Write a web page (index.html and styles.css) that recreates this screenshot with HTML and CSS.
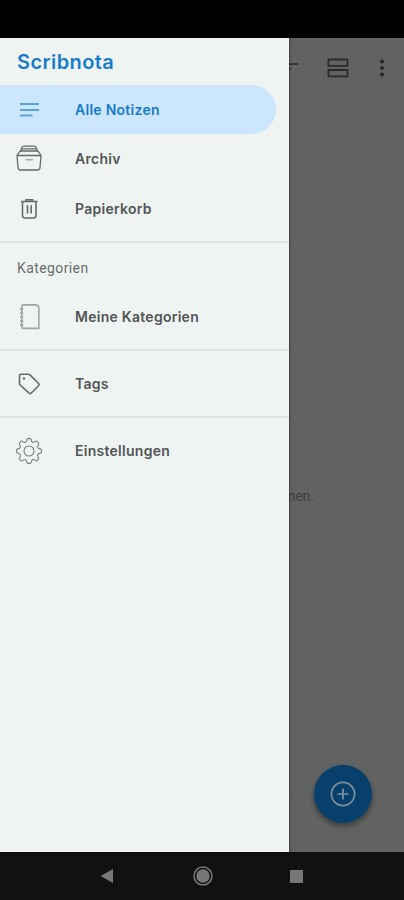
FILE: index.html
```html
<!DOCTYPE html>
<html lang="de">
<head>
<meta charset="utf-8">
<title>Scribnota</title>
<link rel="stylesheet" href="styles.css">
</head>
<body>
<div class="phone">
  <div class="status"></div>
  <div class="screen">
    <main class="notes">
      <header class="toolbar">
        <svg class="sort" width="20" height="16" viewBox="0 0 20 16"><path d="M0 5h20M4 10h9" /></svg>
        <svg class="grid" width="22" height="20" viewBox="0 0 22 20"><path d="M1.5 1.5h19v6.3h-19zM1.5 12h19v6.3h-19z"/></svg>
        <svg class="more" width="4" height="18" viewBox="0 0 4 18"><circle cx="2" cy="2.5" r="1.9"/><circle cx="2" cy="9" r="1.9"/><circle cx="2" cy="15.5" r="1.9"/></svg>
      </header>
      <p class="empty">Notizen erscheinen.</p>
      <div class="bottom"></div>
      <button class="fab" aria-label="Neue Notiz">
        <svg width="28" height="28" viewBox="0 0 28 28"><circle cx="14" cy="14" r="11.6"/><path d="M14 8.5v11M8.5 14h11"/></svg>
      </button>
    </main>
    <nav class="drawer">
      <h1>Scribnota</h1>
      <a class="item active">
        <svg viewBox="0 0 28 28"><path d="M5 8h19M5 14h19M5 19.500h12.500"/></svg>
        <span>Alle Notizen</span>
      </a>
      <a class="item archive">
        <svg viewBox="0 0 28 28"><path d="M2 11.500H26L25 23.500Q24.800 26 22.300 26H5.700Q3.200 26 3 23.500L2 11.500L4.300 8.200Q5.200 7 6.500 7H21.500Q22.800 7 23.700 8.200L26 11.500M5.500 7L6.800 3.600Q7.300 2.200 8.800 2.200H19.200Q20.700 2.200 21.200 3.600L22.500 7M6.700 4.800H21.300"/><path class="soft" d="M10.500 15.800h7.500"/></svg>
        <span>Archiv</span>
      </a>
      <a class="item">
        <svg class="trash" viewBox="0 0 28 28"><path d="M6 6.500h16.500M11 6V4.800h6.500V6M7.500 7v13.500q0 2.500 2.500 2.500h8.500q2.500 0 2.500-2.500V7M12.500 10.300v8.200M16.200 10.300v8.200"/></svg>
        <span>Papierkorb</span>
      </a>
      <hr class="first">
      <h2>Kategorien</h2>
      <a class="item book">
        <svg viewBox="0 0 28 28"><path d="M8.500 1.900H21.500L23.800 4V25.400H8.500Q6.800 25.400 6.800 23.500V3.800Q6.800 1.900 8.500 1.900z"/><path class="rings" d="M6.700 5v19"/></svg>
        <span>Meine Kategorien</span>
      </a>
      <hr>
      <a class="item">
        <svg class="tag" viewBox="0 0 28 28"><path d="M4.500 5.800q0-1.600 1.600-1.600h7.200q.9 0 1.600.7l8.800 8.600q1 1 0 2l-7.600 7.700q-1 1-2 0L5.200 15q-.7-.7-.7-1.600z"/><circle cx="9" cy="8.500" r=".5"/></svg>
        <span>Tags</span>
      </a>
      <hr>
      <a class="item">
        <svg class="gear" viewBox="0 0 28 28">
          <defs><path id="tooth" d="M-2.600-9.600Q-2-12.400-1.500-12.400H1.500Q2-12.400 2.600-9.600Q3.700-8 4.950-8.630"/></defs>
          <g transform="translate(14 14)"><use href="#tooth"/><use href="#tooth" transform="rotate(45)"/><use href="#tooth" transform="rotate(90)"/><use href="#tooth" transform="rotate(135)"/><use href="#tooth" transform="rotate(180)"/><use href="#tooth" transform="rotate(225)"/><use href="#tooth" transform="rotate(270)"/><use href="#tooth" transform="rotate(315)"/><circle r="5"/></g>
        </svg>
        <span>Einstellungen</span>
      </a>
    </nav>
  </div>
  <footer class="navbar">
    <svg class="back" width="14" height="16" viewBox="0 0 14 16"><path d="M.5 8L13 1v14z"/></svg>
    <svg class="home" width="20" height="20" viewBox="0 0 20 20"><circle cx="10" cy="10" r="9"/><circle class="core" cx="10" cy="10" r="6.700"/></svg>
    <svg class="recent" width="13" height="13" viewBox="0 0 13 13"><path d="M0 0h13v13H0z"/></svg>
  </footer>
</div>
</body>
</html>
```
FILE: styles.css
```css
* { box-sizing: border-box; }
body { margin: 0; background: #000; font-family: Inter, Roboto, sans-serif; }
svg { display: block; flex: none; fill: none; }
.phone { width: 404px; height: 900px; display: flex; flex-direction: column; overflow: hidden; }
.status { height: 38px; background: #000; }
.screen { height: 814px; position: relative; }
.notes { height: 100%; background: #616362; display: flex; flex-direction: column; }
.toolbar { height: 60px; display: flex; justify-content: flex-end; align-items: center; padding-right: 20px; }
.sort { stroke: #292b2a; stroke-width: 1.5; margin-right: 29px; margin-top: -2px; }
.grid { stroke: #292b2a; stroke-width: 1.8; margin-right: 31px; }
.more { fill: #242625; }
.empty { margin: 388px 90px 0 0; text-align: right; font: 14px/20px Roboto, sans-serif; color: #3e403f; }
.bottom { margin-top: auto; height: 58px; border-top: 1px solid #5c5e5d; }
.fab { position: absolute; right: 32px; bottom: 29px; width: 58px; height: 58px; border: 0; padding: 0; border-radius: 50%; background: #07406b; display: grid; place-items: center; box-shadow: 0 3px 4px 1px rgba(0,0,0,.3); }
.fab svg { stroke: #7c91a2; stroke-width: 1.7; }
.drawer { position: absolute; inset: 0 auto 0 0; width: 289px; background: #eff4f3; box-shadow: 0 0 3px rgba(0,0,0,.6); overflow: hidden; }
h1 { margin: 0; height: 47px; padding-left: 17px; font-size: 20px; line-height: 48px; font-weight: 600; letter-spacing: .4px; color: #167bcb; }
.item { display: flex; align-items: center; height: 49px; padding-left: 15px; color: #525555; font-size: 14px; font-weight: 600; letter-spacing: .27px; margin-bottom: .5px; }
.item svg { width: 28px; height: 28px; margin-right: 32px; stroke: #666a69; stroke-width: 1.3; }
.item.active { width: 276px; border-radius: 0 25px 25px 0; background: #cce6fe; color: #167bcb; }
.item.active svg { stroke: #5ba3dc; stroke-width: 1.9; }
.item.archive { padding-bottom: 2px; }
.item .soft { stroke: #999d9c; }
.item .trash, .item .tag { stroke-width: 1.6; }
hr { border: 0; height: 2px; margin: 8px 0; background: #dfe3e2; }
hr.first { margin-bottom: 0; }
h2 { margin: 0; height: 49px; padding-left: 17px; font: 400 14px/50px Roboto, sans-serif; letter-spacing: .4px; color: #696d6c; }
.item.book svg { stroke: #a0a4a3; stroke-width: 1.6; }
.item .rings { stroke-width: 3; stroke-dasharray: 2 2; }
.item .gear { stroke: #777b7a; stroke-width: 1.1; }
.navbar { height: 48px; background: #111; display: flex; align-items: center; padding-left: 100px; }
.navbar svg { fill: #777; }
.back { margin-right: 79px; }
.navbar .home { fill: none; stroke: #777; stroke-width: 1.5; margin-right: 77px; }
.home .core { fill: #777; stroke: none; }
```
